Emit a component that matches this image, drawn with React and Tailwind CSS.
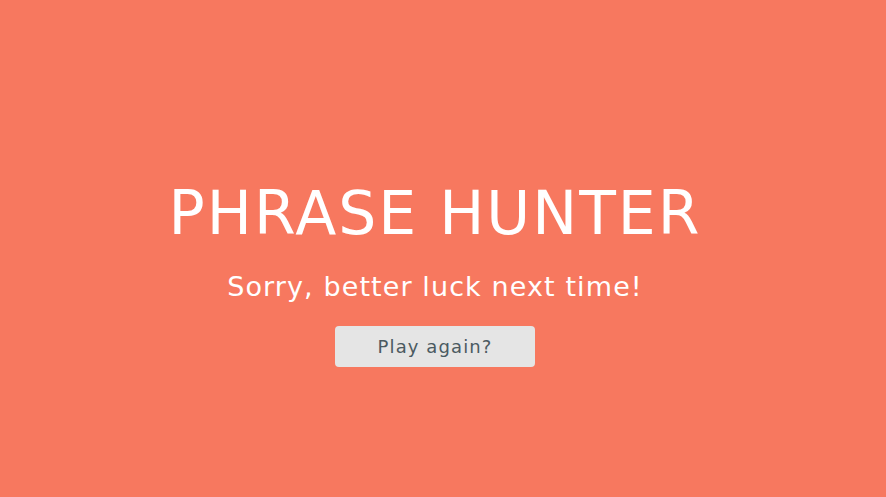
export default function App() {
  return (
    <div
      className="min-h-[497px] w-full bg-[#f7785f] flex flex-col items-center justify-center pt-[52px] pr-[16px]"
      style={{ fontFamily: '"DejaVu Sans", "Open Sans", sans-serif' }}
    >
      <h1 className="text-white text-[60px] leading-none font-normal tracking-[2px]">PHRASE HUNTER</h1>
      <p className="mt-[30px] text-white text-[27px] leading-none tracking-[1.1px]">Sorry, better luck next time!</p>
      <button className="mt-[26px] w-[200px] h-[41px] rounded-[4px] bg-[#e5e5e5] text-[#4b5a61] text-[18px] tracking-[1.1px]">
        Play again?
      </button>
    </div>
  );
}
